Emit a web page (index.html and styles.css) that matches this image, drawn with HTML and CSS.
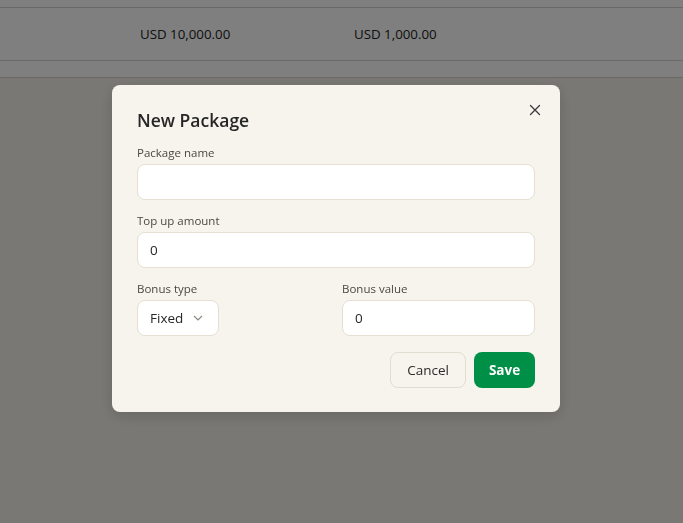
FILE: index.html
```html
<!DOCTYPE html>
<html lang="en">
<head>
<meta charset="utf-8">
<title>New Package</title>
<link rel="stylesheet" href="styles.css">
</head>
<body>
<div class="page">
  <div class="table">
    <div class="row row-top"></div>
    <div class="row row-data">
      <span class="cell cell-a">USD 10,000.00</span>
      <span class="cell cell-b">USD 1,000.00</span>
    </div>
    <div class="row row-tail"></div>
  </div>
</div>
<div class="overlay">
  <div class="modal">
    <div class="modal-head">
      <h2 class="title">New Package</h2>
      <button class="close" aria-label="Close">
        <svg width="12" height="12" viewBox="0 0 12 12"><path d="M1.5 1.5 L10.5 10.5 M10.5 1.5 L1.5 10.5" stroke="#3a3a3a" stroke-width="1.3" fill="none" stroke-linecap="round"/></svg>
      </button>
    </div>
    <label class="field">
      <span class="label">Package name</span>
      <span class="input"></span>
    </label>
    <label class="field">
      <span class="label">Top up amount</span>
      <span class="input">0</span>
    </label>
    <div class="split">
      <label class="field narrow">
        <span class="label">Bonus type</span>
        <span class="input select">Fixed
          <svg width="10" height="6" viewBox="0 0 10 6"><path d="M1 1 L5 5 L9 1" stroke="#8a8680" stroke-width="1.1" fill="none"/></svg>
        </span>
      </label>
      <label class="field wide">
        <span class="label">Bonus value</span>
        <span class="input">0</span>
      </label>
    </div>
    <div class="actions">
      <button class="btn btn-cancel">Cancel</button>
      <button class="btn btn-save">Save</button>
    </div>
  </div>
</div>
</body>
</html>
```

FILE: styles.css
```css
* { box-sizing: border-box; }
html, body { margin: 0; padding: 0; }
body {
  width: 683px;
  height: 523px;
  overflow: hidden;
  background: #f4f1ea;
  font-family: "Open Sans", "Noto Sans", sans-serif;
  color: #262626;
}
.page { height: 523px; }
.table { background: #ffffff; }
.row { border-bottom: 1px solid #d4d2cd; }
.row-top { height: 8px; }
.row-data {
  height: 53px;
  display: flex;
  align-items: center;
  font-size: 13.3px;
  color: #222;
}
.cell-a { margin-left: 140px; width: 214px; }
.row-tail { height: 17px; }

.overlay {
  position: fixed;
  inset: 0;
  background: rgba(0, 0, 0, 0.5);
  padding: 85px 0 0 112px;
}
.modal {
  width: 448px;
  background: #f7f4ee;
  border-radius: 8px;
  box-shadow: 0 4px 14px rgba(0, 0, 0, 0.15);
  padding: 21px 25px 24px 25px;
  display: flex;
  flex-direction: column;
}
.modal > * { flex-shrink: 0; }
.modal-head {
  display: flex;
  justify-content: space-between;
  align-items: flex-start;
  height: 39px;
}
.title {
  margin: 2px 0 0 0;
  font-size: 17.5px;
  font-weight: 600;
  line-height: 24px;
  color: #262626;
}
.close {
  border: 0;
  background: none;
  padding: 0;
  margin: -8px -12px 0 0;
  width: 24px;
  height: 24px;
  display: flex;
  align-items: center;
  justify-content: center;
}
.field { display: flex; flex-direction: column; margin-bottom: 13px; }
.label {
  font-size: 11.5px;
  line-height: 16px;
  color: #4a4844;
  margin-bottom: 3px;
}
.input {
  height: 36px;
  flex-shrink: 0;
  background: #ffffff;
  border: 1px solid #e6e0d4;
  border-radius: 8px;
  padding: 0 12px;
  display: flex;
  align-items: center;
  font-size: 13.5px;
  color: #262626;
}
.split { display: flex; gap: 123px; }
.narrow { width: 82px; }
.wide { flex: 1; }
.select { justify-content: space-between; padding-right: 15px; }
.actions {
  display: flex;
  justify-content: flex-end;
  gap: 8px;
  margin-top: 3px;
}
.btn {
  height: 36px;
  border-radius: 8px;
  font-family: "Open Sans", "Noto Sans", sans-serif;
  font-size: 13.5px;
  padding: 0;
}
.btn-cancel {
  width: 76px;
  background: #f7f4ee;
  border: 1px solid #e2dcd0;
  color: #2a2a2a;
  font-weight: 500;
}
.btn-save {
  width: 61px;
  background: #008f46;
  border: 0;
  color: #ffffff;
  font-weight: 700;
}
```
